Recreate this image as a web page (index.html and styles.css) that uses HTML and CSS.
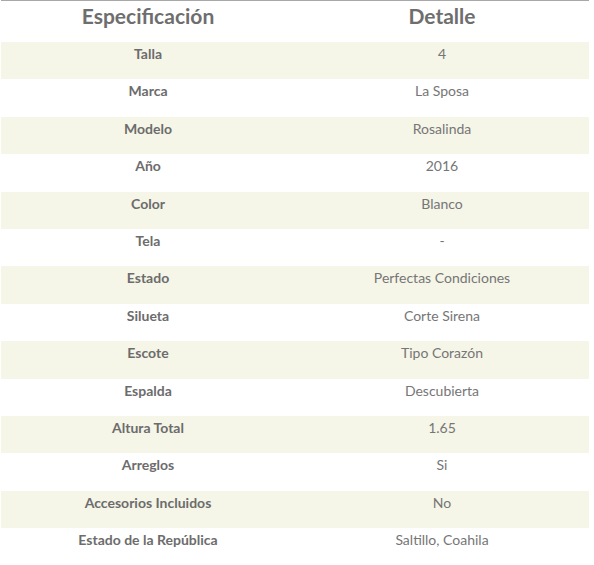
FILE: index.html
```html
<!DOCTYPE html>
<html lang="es">
<head>
<meta charset="utf-8">
<link rel="stylesheet" href="styles.css">
</head>
<body>
<div class="spec">
  <div class="row head"><div class="cell">Especificación</div><div class="cell">Detalle</div></div>
  <div class="row"><div class="cell k">Talla</div><div class="cell">4</div></div>
  <div class="row"><div class="cell k">Marca</div><div class="cell">La Sposa</div></div>
  <div class="row"><div class="cell k">Modelo</div><div class="cell">Rosalinda</div></div>
  <div class="row"><div class="cell k">Año</div><div class="cell">2016</div></div>
  <div class="row"><div class="cell k">Color</div><div class="cell">Blanco</div></div>
  <div class="row"><div class="cell k">Tela</div><div class="cell">-</div></div>
  <div class="row"><div class="cell k">Estado</div><div class="cell">Perfectas Condiciones</div></div>
  <div class="row"><div class="cell k">Silueta</div><div class="cell">Corte Sirena</div></div>
  <div class="row"><div class="cell k">Escote</div><div class="cell">Tipo Corazón</div></div>
  <div class="row"><div class="cell k">Espalda</div><div class="cell">Descubierta</div></div>
  <div class="row"><div class="cell k">Altura Total</div><div class="cell">1.65</div></div>
  <div class="row"><div class="cell k">Arreglos</div><div class="cell">Si</div></div>
  <div class="row"><div class="cell k">Accesorios Incluidos</div><div class="cell">No</div></div>
  <div class="row"><div class="cell k">Estado de la República</div><div class="cell">Saltillo, Coahila</div></div>
</div>
</body>
</html>
```
FILE: styles.css
```css
html, body {
  margin: 0;
  padding: 0;
  background: #ffffff;
}
body {
  padding-left: 1px;
  font-family: "Lato", "Open Sans", sans-serif;
  color: #707070;
}
.spec {
  width: 588px;
  border-top: 1px solid #a8a8a8;
  display: flex;
  flex-direction: column;
}
.row {
  display: grid;
  grid-template-columns: 294px 294px;
  height: 37.4px;
  font-size: 14px;
  line-height: 17px;
  color: #767676;
}
.row .cell {
  text-align: center;
  padding-top: 3px;
}
.row .cell.k {
  font-weight: 700;
  color: #6c6c6c;
}
.row.head {
  height: 41px;
  font-size: 21px;
  line-height: 26px;
  font-weight: 700;
  color: #6e6e6e;
}
.row.head .cell {
  padding-top: 2px;
}
.row:nth-child(even) {
  background: #f5f5e8;
}
```
